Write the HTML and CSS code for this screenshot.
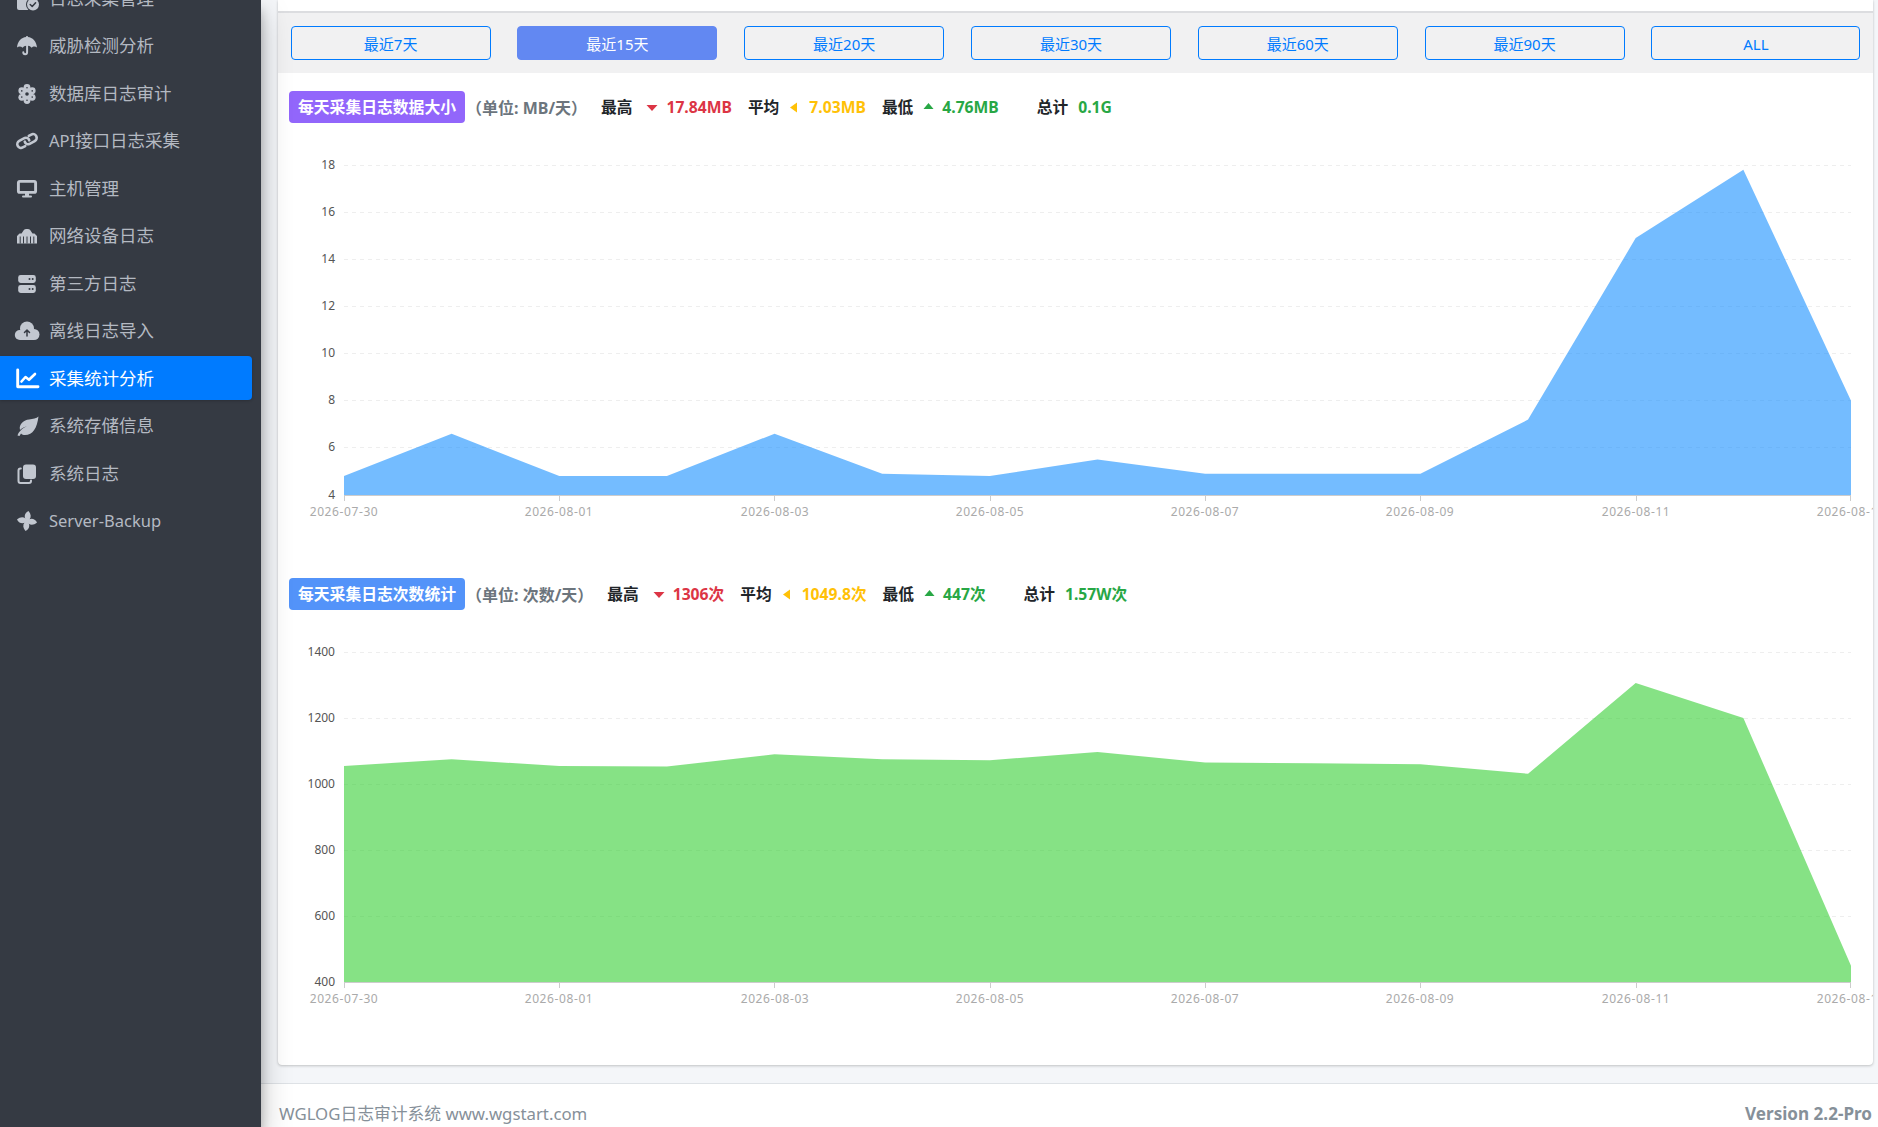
FILE: index.html
```html
<!DOCTYPE html>
<html lang="zh-CN">
<head>
<meta charset="utf-8">
<title>采集统计分析</title>
<link rel="stylesheet" href="styles.css">
</head>
<body>
<div class="app">
  <aside class="sidebar">
    <ul class="nav">
      <li class="nav-item"><svg class="ico" viewBox="0 0 20 20"><rect x="0" y="0" width="13" height="21" rx="2"/><circle class="hole-line" cx="16" cy="15.5" r="7"/><circle cx="16" cy="15.5" r="6"/><path class="mark" d="M13.2 15.5l2 2 3.4-3.8"/></svg><span>日志采集管理</span></li>
      <li class="nav-item"><svg class="ico" viewBox="0 0 20 20"><path d="M9.2 0h1.600v1.100C15.600 1.500 19.400 5.400 20 11.500c-1.600-1.500-4-1.500-5.400.3-1-1.300-2.200-1.900-3.500-2v6.500a2.900 2.900 0 0 1-5.800 0 1 1 0 0 1 2 0 .9.9 0 0 0 1.800 0V9.800c-1.300.1-2.500.7-3.500 2C3.900 10 1.600 10 0 11.500.6 5.400 4.400 1.500 9.200 1.100z"/></svg><span>威胁检测分析</span></li>
      <li class="nav-item"><svg class="ico" viewBox="0 0 20 20"><circle cx="10" cy="3.400" r="3.400"/><circle cx="15.200" cy="6.700" r="3.400"/><circle cx="15.200" cy="13.300" r="3.400"/><circle cx="10" cy="16.600" r="3.400"/><circle cx="4.800" cy="13.300" r="3.400"/><circle cx="4.800" cy="6.700" r="3.400"/><circle cx="10" cy="10" r="6"/><circle class="hole" cx="10" cy="10" r="1.800"/><circle class="hole" cx="10" cy="3.800" r=".8"/><circle class="hole" cx="15.200" cy="6.900" r=".8"/><circle class="hole" cx="15.200" cy="13.100" r=".8"/><circle class="hole" cx="10" cy="16.200" r=".8"/><circle class="hole" cx="4.800" cy="13.100" r=".8"/><circle class="hole" cx="4.800" cy="6.900" r=".8"/></svg><span>数据库日志审计</span></li>
      <li class="nav-item"><svg class="ico" viewBox="0 0 20 20"><g class="outline" transform="rotate(-28 10 10)"><path d="M6 13.700H3.200A3.700 3.700 0 0 1 3.200 6.300H9.500A3.400 3.400 0 0 1 12.300 10.500"/><path d="M14 6.300H16.800A3.700 3.700 0 0 1 16.800 13.700H10.500A3.400 3.400 0 0 1 7.700 9.500"/></g></svg><span><span class="latin">API</span>接口日志采集</span></li>
      <li class="nav-item"><svg class="ico" viewBox="0 0 20 20"><rect class="outline bold" x="1.400" y="2.400" width="17.200" height="11" rx="1.500"/><rect x="8" y="14" width="4" height="3"/><rect x="5" y="16.500" width="10" height="2" rx="1"/></svg><span>主机管理</span></li>
      <li class="nav-item"><svg class="ico" viewBox="0 0 20 20"><path d="M0 17.500V10L2.500 7.500H4.500L6.500 4.500Q7 3 9 3H11Q13 3 13.500 4.500L15.500 7.500H17.500L20 10V17.500Z"/><path class="teeth" d="M3.200 10.500V17.500M6.500 10.500V17.500M10 10.500V17.500M13.500 10.500V17.500M16.800 10.500V17.500"/></svg><span>网络设备日志</span></li>
      <li class="nav-item"><svg class="ico" viewBox="0 0 20 20"><rect x="1.200" y="1" width="17.600" height="8" rx="2.400"/><rect x="1.200" y="11" width="17.600" height="8" rx="2.400"/><circle class="hole" cx="12.500" cy="5" r="1"/><circle class="hole" cx="15.700" cy="5" r="1"/><circle class="hole" cx="12.500" cy="15" r="1"/><circle class="hole" cx="15.700" cy="15" r="1"/></svg><span>第三方日志</span></li>
      <li class="nav-item"><svg class="ico" viewBox="0 0 20 20"><circle cx="10" cy="7.500" r="7"/><circle cx="2.800" cy="14" r="5"/><circle cx="17" cy="13.500" r="5.500"/><rect x="3" y="10" width="14" height="9"/><path class="mark" d="M10 15V9.500M7.500 11.500L10 9l2.500 2.500"/></svg><span>离线日志导入</span></li>
      <li class="nav-item active"><svg class="ico" viewBox="0 0 20 20"><path class="outline bold" d="M.7 1V17.700H21"/><path class="outline" d="M4.500 12.500L8.500 8l3.500 2.800L18 5"/></svg><span>采集统计分析</span></li>
      <li class="nav-item"><svg class="ico" viewBox="0 0 20 20"><path d="M21.500 .5C20 12 16 19 8 19 6.500 19 5 18.500 4 17.500L2.500 20 .5 19.500C2 15 6 11.500 12 9.500 8 10.500 4.500 12.500 3 14 1.500 8 7 4 12 3.500 16 3 19.500 2.500 21.500 .5Z"/></svg><span>系统存储信息</span></li>
      <li class="nav-item"><svg class="ico" viewBox="0 0 20 20"><rect x="6" y=".5" width="13" height="14.500" rx="3"/><path class="outline slim" d="M3.800 4.500H3.500A2 2 0 0 0 1.500 6.500V17A2 2 0 0 0 3.500 19H12A2 2 0 0 0 14 17V16.500"/></svg><span>系统日志</span></li>
      <li class="nav-item"><svg class="ico" viewBox="0 0 20 20"><path d="M10 10C7 7.500 6.500 2.500 11.500 0 14 3 14.500 6 12.500 8.500Z"/><path d="M10 10C7 7.500 6.500 2.500 11.500 0 14 3 14.500 6 12.500 8.500Z" transform="rotate(90 10 10)"/><path d="M10 10C7 7.500 6.500 2.500 11.500 0 14 3 14.500 6 12.500 8.500Z" transform="rotate(180 10 10)"/><path d="M10 10C7 7.500 6.500 2.500 11.500 0 14 3 14.500 6 12.500 8.500Z" transform="rotate(270 10 10)"/><circle cx="10" cy="10" r="2.800"/></svg><span><span class="latin">Server-Backup</span></span></li>
    </ul>
  </aside>
  <div class="main">
    <section class="content">
      <div class="card">
        <div class="card-stub"></div>
        <div class="ranges">
          <button class="range">最近7天</button>
          <button class="range current">最近15天</button>
          <button class="range">最近20天</button>
          <button class="range">最近30天</button>
          <button class="range">最近60天</button>
          <button class="range">最近90天</button>
          <button class="range">ALL</button>
        </div>

        <div class="chart-block">
          <div class="stats">
            <span class="tag purple">每天采集日志数据大小</span>
            <span class="unit">（单位: MB/天）</span>
            <b class="key first">最高</b>
            <svg class="caret down" viewBox="0 0 11 6"><path d="M0 0H11L5.500 6Z"/></svg>
            <b class="val red">17.84MB</b>
            <b class="key">平均</b>
            <svg class="caret left" viewBox="0 0 7 10"><path d="M7 0V10L0 5Z"/></svg>
            <b class="val yellow">7.03MB</b>
            <b class="key">最低</b>
            <svg class="caret up" viewBox="0 0 10 6"><path d="M0 6H10L5 0Z"/></svg>
            <b class="val green">4.76MB</b>
            <b class="key total">总计</b>
            <b class="val green sum">0.1G</b>
          </div>
          <svg class="chart" viewBox="0 0 1595 455" width="1595" height="455">
            <g class="grid">
              <path d="M66 42.500H1573"/><path d="M66 89.500H1573"/><path d="M66 136.500H1573"/><path d="M66 183.500H1573"/><path d="M66 230.500H1573"/><path d="M66 277.500H1573"/><path d="M66 324.500H1573"/>
            </g>
            <polygon class="area blue" points="66,353.100 173.640,310.700 281.290,353.100 388.930,353.100 496.570,310.700 604.210,350.800 711.860,353.100 819.500,336.600 927.140,350.800 1034.790,350.800 1142.430,350.800 1250.070,296.600 1357.710,115.100 1465.360,46.700 1573,277.700 1573,372 66,372"/>
            <path class="axis" d="M66 372.500H1573M66.500 372V378M281.500 372V378M496.500 372V378M712.500 372V378M927.500 372V378M1142.500 372V378M1358.500 372V378M1572.500 372V378"/>
            <g class="ylabels">
              <text x="57" y="45.500">18</text><text x="57" y="93">16</text><text x="57" y="139.500">14</text><text x="57" y="186.500">12</text><text x="57" y="233.500">10</text><text x="57" y="280.500">8</text><text x="57" y="328">6</text><text x="57" y="375.500">4</text>
            </g>
            <g class="xlabels">
              <text x="66" y="393">2026-07-30</text><text x="281" y="393">2026-08-01</text><text x="497" y="393">2026-08-03</text><text x="712" y="393">2026-08-05</text><text x="927" y="393">2026-08-07</text><text x="1142" y="393">2026-08-09</text><text x="1358" y="393">2026-08-11</text><text x="1573" y="393">2026-08-13</text>
            </g>
          </svg>
        </div>

        <div class="chart-block">
          <div class="stats">
            <span class="tag blue-tag">每天采集日志次数统计</span>
            <span class="unit">（单位: 次数/天）</span>
            <b class="key first">最高</b>
            <svg class="caret down" viewBox="0 0 11 6"><path d="M0 0H11L5.500 6Z"/></svg>
            <b class="val red">1306次</b>
            <b class="key">平均</b>
            <svg class="caret left" viewBox="0 0 7 10"><path d="M7 0V10L0 5Z"/></svg>
            <b class="val yellow">1049.8次</b>
            <b class="key">最低</b>
            <svg class="caret up" viewBox="0 0 10 6"><path d="M0 6H10L5 0Z"/></svg>
            <b class="val green">447次</b>
            <b class="key total">总计</b>
            <b class="val green sum">1.57W次</b>
          </div>
          <svg class="chart" viewBox="0 0 1595 455" width="1595" height="455">
            <g class="grid">
              <path d="M66 42.500H1573"/><path d="M66 108.500H1573"/><path d="M66 174.500H1573"/><path d="M66 240.500H1573"/><path d="M66 306.500H1573"/>
            </g>
            <polygon class="area lime" points="66,155.900 173.640,149.300 281.290,155.900 388.930,156.500 496.570,144.300 604.210,149.300 711.860,150.200 819.500,142 927.140,152.600 1034.790,153.200 1142.430,154.200 1250.070,163.800 1357.710,73 1465.360,108 1573,355.800 1573,372 66,372"/>
            <path class="axis" d="M66 372.500H1573M66.500 372V378M281.500 372V378M496.500 372V378M712.500 372V378M927.500 372V378M1142.500 372V378M1358.500 372V378M1572.500 372V378"/>
            <g class="ylabels">
              <text x="57" y="45.500">1400</text><text x="57" y="111.500">1200</text><text x="57" y="177.500">1000</text><text x="57" y="243.500">800</text><text x="57" y="309.500">600</text><text x="57" y="375.500">400</text>
            </g>
            <g class="xlabels">
              <text x="66" y="393">2026-07-30</text><text x="281" y="393">2026-08-01</text><text x="497" y="393">2026-08-03</text><text x="712" y="393">2026-08-05</text><text x="927" y="393">2026-08-07</text><text x="1142" y="393">2026-08-09</text><text x="1358" y="393">2026-08-11</text><text x="1573" y="393">2026-08-13</text>
            </g>
          </svg>
        </div>
      </div>
    </section>
    <footer class="footer">
      <span class="site">WGLOG日志审计系统 www.wgstart.com</span>
      <strong class="version">Version 2.2-Pro</strong>
    </footer>
  </div>
</div>
</body>
</html>
```

FILE: styles.css
```css
* { box-sizing: border-box; }

html, body {
  margin: 0;
  height: 100%;
  overflow: hidden;
}

body {
  font-family: "Noto Sans", "Noto Sans CJK SC", sans-serif;
  background: #f4f6f9;
  color: #212529;
}

.app {
  display: flex;
  width: 1878px;
  height: 1127px;
  overflow: hidden;
}

/* Sidebar */
.sidebar {
  flex: 0 0 261px;
  background: #353a43;
  position: relative;
  z-index: 2;
  box-shadow: 0 14px 28px rgba(0, 0, 0, .25), 0 10px 10px rgba(0, 0, 0, .22);
}

.nav {
  list-style: none;
  margin: -24px 0 0;
  padding: 0 9px 0 0;
  display: flex;
  flex-direction: column;
  gap: 3.5px;
}

.nav-item {
  height: 44px;
  display: flex;
  align-items: center;
  gap: 12.5px;
  padding: 1px 0 0 16.5px;
  color: #b4b9c2;
  font-size: 17.5px;
  line-height: 1;
  border-radius: 0 4px 4px 0;
}

.nav-item.active {
  background: #007bff;
  color: #fff;
  box-shadow: 0 1px 3px rgba(0, 0, 0, .2);
}

.latin { font-size: 16.5px; }

.ico {
  flex: 0 0 20px;
  width: 20px;
  height: 20px;
  overflow: visible;
  fill: #c2c7d0;
}

.active .ico { fill: none; }

.ico .outline {
  fill: none;
  stroke: #c2c7d0;
  stroke-width: 2.6;
  stroke-linecap: round;
  stroke-linejoin: round;
}

.active .ico .outline { stroke: #fff; }
.ico .outline.bold { stroke-width: 2.9; }
.ico .outline.slim { stroke-width: 2; }
.ico .hole { fill: #353a43; }
.ico .hole-line { fill: #353a43; }
.ico .mark { fill: none; stroke: #353a43; stroke-width: 1.5; stroke-linecap: round; stroke-linejoin: round; }
.ico .teeth { fill: none; stroke: #353a43; stroke-width: 1; }

/* Main column */
.main {
  flex: 1;
  min-width: 0;
  display: flex;
  flex-direction: column;
}

.content {
  flex: 1;
  padding: 0 5px 0 17px;
}

.card {
  width: 1595px;
  background: #fff;
  border-radius: 0 0 4px 4px;
  box-shadow: 0 0 1px rgba(0, 0, 0, .125), 0 1px 3px rgba(0, 0, 0, .2);
}

.card-stub {
  height: 13px;
  border-bottom: 2px solid #dcdde0;
}

.ranges {
  height: 60px;
  padding: 13px 0 0 12.6px;
  background: #f1f1f2;
  display: grid;
  grid-template-columns: repeat(6, 200px) 209px;
  column-gap: 26.8px;
  align-items: start;
}

.range {
  height: 34px;
  padding: 2px 0 0;
  border: 1px solid #007bff;
  border-radius: 4px;
  background: transparent;
  color: #007bff;
  font-family: inherit;
  font-size: 15px;
  line-height: 1;
}

.range.current {
  background: #6288f2;
  border-color: #6288f2;
  color: #fff;
}

.chart-block { height: 487px; }

.card-stub + .ranges + .chart-block { padding-top: 18px; height: 505px; }

.stats {
  height: 32px;
  margin-left: 11px;
  display: flex;
  align-items: center;
  font-size: 15.7px;
  line-height: 1;
  white-space: nowrap;
}

.stats b, .stats span { padding-top: 2px; }

.stats .tag {
  width: 176px;
  height: 32px;
  padding-top: 1px;
  display: flex;
  align-items: center;
  justify-content: center;
  border-radius: 4px;
  color: #fff;
  font-weight: 700;
  font-size: 15.8px;
}

.purple { background: #9266fb; }
.blue-tag { background: #5393f9; }

.stats .unit {
  margin-left: 1px;
  padding-top: 1px;
  color: #6c757d;
  font-size: 16px;
  font-weight: 700;
}

.key { color: #212529; margin-left: 16px; }
.key.first { margin-left: 14px; }
.key.total { margin-left: 38px; }

.caret { margin-left: 11px; margin-right: 9px; flex: none; }
.caret.down { width: 12px; height: 6px; margin-left: 14px; margin-right: 8px; margin-top: 2px; fill: #dc3545; }
.caret.left { width: 7px; height: 11px; margin-right: 12px; fill: #ffc107; }
.caret.up { width: 11px; height: 6px; margin-left: 10px; margin-right: 8px; margin-top: -2px; fill: #28a745; }

.val { font-weight: 700; }
.sum { margin-left: 10px; }
.red { color: #dc3545; }
.yellow { color: #ffc107; }
.green { color: #28a745; }

.chart { display: block; }

.grid path {
  fill: none;
  stroke: #eeeeee;
  stroke-dasharray: 4 4;
}

.area.blue { fill: #1890ff; fill-opacity: .6; }
.area.lime { fill: #35cf34; fill-opacity: .6; }

.axis { fill: none; stroke: #cccccc; }

.ylabels text {
  font-size: 12px;
  fill: #555555;
  text-anchor: end;
}

.xlabels text {
  font-size: 12px;
  letter-spacing: .6px;
  fill: #aaaaaa;
  text-anchor: middle;
}

/* Footer */
.footer {
  height: 44px;
  flex: none;
  margin-top: 18px;
  padding: 15px 6px 0 18px;
  border-top: 1px solid #dee2e6;
  background: #fff;
  display: flex;
  align-items: center;
  justify-content: space-between;
  color: #869099;
}

.site { font-size: 16.8px; }
.version { font-size: 17.1px; }
```
